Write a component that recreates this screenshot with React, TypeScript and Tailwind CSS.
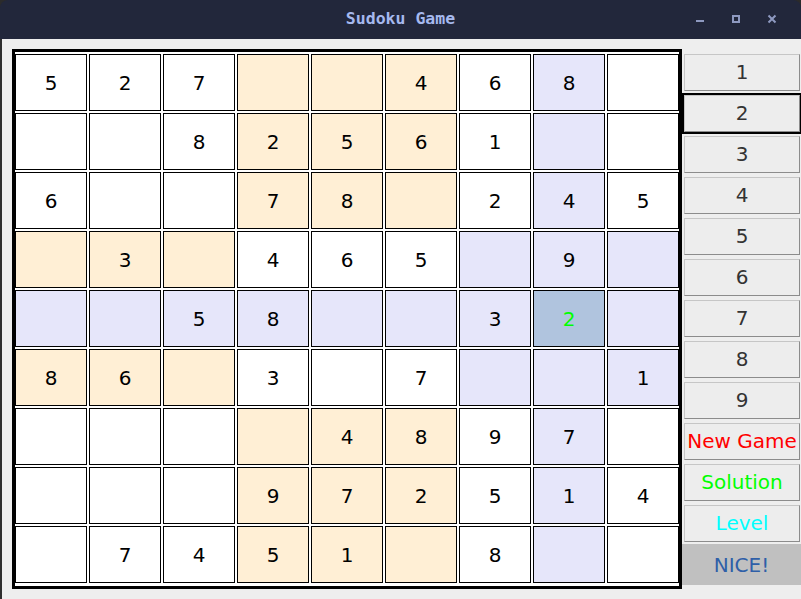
import React from "react";

const grid: string[][] = [
  ["5", "2", "7", "", "", "4", "6", "8", ""],
  ["", "", "8", "2", "5", "6", "1", "", ""],
  ["6", "", "", "7", "8", "", "2", "4", "5"],
  ["", "3", "", "4", "6", "5", "", "9", ""],
  ["", "", "5", "8", "", "", "3", "2", ""],
  ["8", "6", "", "3", "", "7", "", "", "1"],
  ["", "", "", "", "4", "8", "9", "7", ""],
  ["", "", "", "9", "7", "2", "5", "1", "4"],
  ["", "7", "4", "5", "1", "", "8", "", ""],
];

const selR = 4;
const selC = 7;

function cellClass(r: number, c: number): string {
  if (r === selR && c === selC) return "bg-[#b0c4de] text-[#00ff00]";
  const br = Math.floor(r / 3);
  const bc = Math.floor(c / 3);
  const sbr = Math.floor(selR / 3);
  const sbc = Math.floor(selC / 3);
  if (r === selR || c === selC || (br === sbr && bc === sbc)) return "bg-[#e6e6fa] text-black";
  if ((br + bc) % 2 === 1) return "bg-[#ffefd5] text-black";
  return "bg-white text-black";
}

const font = { fontFamily: '"DejaVu Sans", "Liberation Sans", sans-serif' };

function Btn({ label, color, focused }: { label: string; color: string; focused?: boolean }) {
  return (
    <div
      className={
        "h-[41px] w-[119px] pl-[2px] pr-[1px] py-[2px] " +
        (focused ? "shadow-[inset_0_0_0_2px_#000]" : "")
      }
    >
      <div
        className={
          "h-full w-full bg-[#ededed] border border-t-[#c6c6c6] border-l-[#c6c6c6] border-b-[#8c8c8c] border-r-[#8c8c8c] flex items-center justify-center text-[20px] leading-none pb-[2px] " +
          color
        }
        style={font}
      >
        {label}
      </div>
    </div>
  );
}

export default function App() {
  return (
    <div className="w-[801px] h-[599px] bg-[#2b2b2b] flex flex-col overflow-hidden">
      <div className="h-[39px] bg-[#22273b] rounded-t-[8px] relative flex items-center justify-center shrink-0">
        <span
          className="text-[#a6b9ef] text-[16.5px] font-bold tracking-[0px]"
          style={{ fontFamily: '"DejaVu Sans Mono", "Liberation Mono", monospace' }}
        >
          Sudoku Game
        </span>
        <div className="absolute left-[696px] top-[20px] w-[8px] h-[2px] bg-[#8e99c0]" />
        <div className="absolute left-[732px] top-[15px] w-[8px] h-[8px] border-2 border-[#8e99c0]" />
        <svg className="absolute left-[767px] top-[14px]" width="10" height="10" viewBox="0 0 10 10">
          <path d="M1.5 1.5 L8.5 8.5 M8.5 1.5 L1.5 8.5" stroke="#8e99c0" strokeWidth="2" />
        </svg>
      </div>
      <div className="flex-1 flex">
        <div className="w-[2px] bg-[#2e2e2e]" />
        <div className="flex-1 bg-[#eeeeee] flex items-start">
          <div className="ml-[10px] mt-[10px] w-[670px] h-[540px] border-[3px] border-black bg-white pt-[2px]">
            <div className="grid grid-cols-[repeat(9,72px)] grid-rows-[repeat(9,57px)] gap-[2px]">
              {grid.map((row, r) =>
                row.map((v, c) => (
                  <div
                    key={r + "-" + c}
                    className={
                      "border border-black flex items-center justify-center text-[20px] leading-none " +
                      cellClass(r, c)
                    }
                    style={font}
                  >
                    {v}
                  </div>
                ))
              )}
            </div>
          </div>
          <div className="mt-[13px] flex flex-col">
            {["1", "2", "3", "4", "5", "6", "7", "8", "9"].map((n) => (
              <Btn key={n} label={n} color="text-[#333333]" focused={n === "2"} />
            ))}
            <Btn label="New Game" color="text-[#ff0000]" />
            <Btn label="Solution" color="text-[#00ff00]" />
            <Btn label="Level" color="text-[#00ffff]" />
            <div
              className="h-[41px] w-[119px] bg-[#c0c0c0] flex items-center justify-center text-[20px] text-[#2f5fa8] leading-none"
              style={font}
            >
              NICE!
            </div>
          </div>
        </div>
      </div>
    </div>
  );
}
